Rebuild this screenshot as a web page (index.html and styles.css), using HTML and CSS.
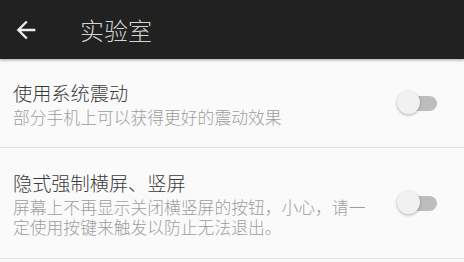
FILE: index.html
```html
<!DOCTYPE html>
<html lang="zh-CN">
<head>
<meta charset="utf-8">
<title>实验室</title>
<link rel="stylesheet" href="styles.css">
</head>
<body>
<header class="toolbar">
  <svg class="back" width="28" height="28" viewBox="0 0 24 24"><path d="M20 11H7.83l5.59-5.59L12 4l-8 8 8 8 1.41-1.41L7.83 13H20v-2z" fill="#eeeeee"/></svg>
  <h1 class="title">实验室</h1>
</header>
<main class="list">
  <div class="row">
    <div class="text">
      <div class="label">使用系统震动</div>
      <div class="desc">部分手机上可以获得更好的震动效果</div>
    </div>
    <div class="switch"><span class="track"></span><span class="thumb"></span></div>
  </div>
  <div class="row">
    <div class="text">
      <div class="label">隐式强制横屏、竖屏</div>
      <div class="desc">屏幕上不再显示关闭横竖屏的按钮，小心，请一定使用按键来触发以防止无法退出。</div>
    </div>
    <div class="switch"><span class="track"></span><span class="thumb"></span></div>
  </div>
</main>
</body>
</html>
```
FILE: styles.css
```css
html, body {
  margin: 0;
  padding: 0;
  background: #fafafa;
  font-family: "Noto Sans CJK SC", "Noto Sans", sans-serif;
  font-weight: 300;
  width: 464px;
  height: 262px;
  overflow: hidden;
}
.toolbar {
  height: 59px;
  background: #212121;
  display: flex;
  align-items: center;
  box-shadow: 0 1px 3px rgba(0,0,0,0.35);
  position: relative;
  z-index: 1;
}
.back {
  margin-left: 12px;
  width: 28px;
  height: 28px;
}
.title {
  margin: 0 0 0 40px;
  font-size: 24px;
  font-weight: 300;
  color: #d4d4d4;
  line-height: 30px;
}
.list {
  display: flex;
  flex-direction: column;
}
.row {
  display: flex;
  align-items: center;
  padding: 0 27px 0 13px;
  border-bottom: 1px solid #e2e2e2;
}
.row:nth-child(1) { height: 88px; }
.row:nth-child(2) { height: 110px; }
.text {
  flex: 1;
  min-width: 0;
}
.label {
  font-size: 19.2px;
  line-height: 28px;
  color: #3a3a3a;
}
.desc {
  font-size: 16.8px;
  line-height: 20px;
  color: #9e9e9e;
}
.switch {
  position: relative;
  width: 40px;
  height: 24px;
  margin-left: 24px;
  display: flex;
  align-items: center;
}
.track {
  margin-left: 3px;
  width: 37px;
  height: 15px;
  border-radius: 8px;
  background: #bdbdbd;
}
.thumb {
  position: absolute;
  left: 0;
  top: 0;
  width: 23px;
  height: 23px;
  border-radius: 50%;
  background: #f1f1f1;
  box-shadow: 0 1px 3px rgba(0,0,0,0.3);
}
```
